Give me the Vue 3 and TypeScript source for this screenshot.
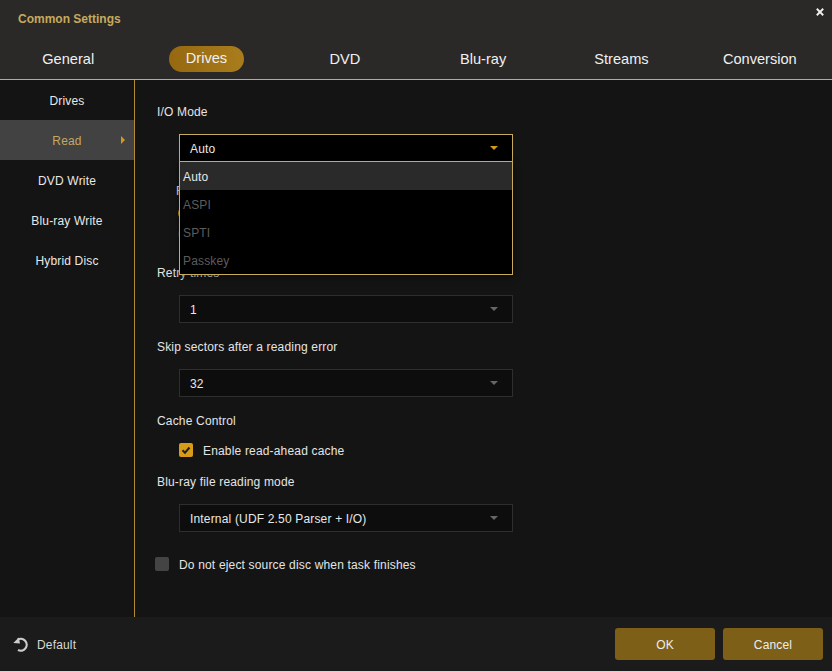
<script setup lang="ts">
import { ref } from 'vue'

const tabs = ['General', 'Drives', 'DVD', 'Blu-ray', 'Streams', 'Conversion']
const activeTab = ref('Drives')

const sideItems = ['Drives', 'Read', 'DVD Write', 'Blu-ray Write', 'Hybrid Disc']
const activeSide = ref('Read')

const ioModes = ['Auto', 'ASPI', 'SPTI', 'Passkey']
</script>

<template>
  <div class="dialog">
    <header class="head">
      <div class="title-row">
        <span class="title">Common Settings</span>
        <svg class="close" viewBox="0 0 10 10" width="8" height="8">
          <path d="M1 1 9 9M9 1 1 9" stroke="#eee" stroke-width="2.4" fill="none" />
        </svg>
      </div>
      <nav class="tabs">
        <div v-for="t in tabs" :key="t" class="tab">
          <span :class="{ pill: t === activeTab }">{{ t }}</span>
        </div>
      </nav>
    </header>

    <div class="body">
      <aside class="side">
        <div
          v-for="s in sideItems"
          :key="s"
          class="side-item"
          :class="{ active: s === activeSide }"
        >
          {{ s }}
          <i v-if="s === activeSide" class="side-arrow"></i>
        </div>
      </aside>

      <main class="main">
        <div class="label">I/O Mode</div>
        <div class="select-wrap">
          <div class="select open">
            <span>Auto</span>
            <i class="caret gold"></i>
          </div>
          <ul class="popup">
            <li
              v-for="(m, i) in ioModes"
              :key="m"
              :class="i === 0 ? 'current' : 'disabled'"
            >
              {{ m }}
            </li>
          </ul>
        </div>

        <!-- mostly hidden behind the open list -->
        <div class="behind">
          <div class="label">Read mode</div>
          <div class="radio-row"><i class="radio on"></i></div>
          <div class="radio-row"><i class="radio"></i></div>
        </div>

        <div class="label tight">Retry times</div>
        <div class="select gap-s">
          <span>1</span>
          <i class="caret"></i>
        </div>

        <div class="label tight gap-l">Skip sectors after a reading error</div>
        <div class="select gap-s">
          <span>32</span>
          <i class="caret"></i>
        </div>

        <div class="label cache">Cache Control</div>
        <label class="check indented">
          <span class="box on">
            <svg viewBox="0 0 14 14" width="14" height="14">
              <path d="M3.5 7.2 6 9.7 10.5 4.5" stroke="#222" stroke-width="2" fill="none" />
            </svg>
          </span>
          <span class="check-text">Enable read-ahead cache</span>
        </label>

        <div class="label tight gap-l">Blu-ray file reading mode</div>
        <div class="select gap-s">
          <span>Internal (UDF 2.50 Parser + I/O)</span>
          <i class="caret"></i>
        </div>

        <label class="check eject">
          <span class="box"></span>
          <span class="check-text">Do not eject source disc when task finishes</span>
        </label>
      </main>
    </div>

    <footer class="foot">
      <div class="default">
        <svg viewBox="0 0 16 16" width="16" height="16">
          <path d="M4.6 3.8A5.9 5.9 0 1 1 5 14" stroke="#ccc" stroke-width="2.2" fill="none" />
          <path d="M0.3 7 7 7.6 5.8 1.6Z" fill="#ccc" />
        </svg>
        <span>Default</span>
      </div>
      <div class="buttons">
        <button class="btn">OK</button>
        <button class="btn">Cancel</button>
      </div>
    </footer>
  </div>
</template>

<style scoped>
.dialog {
  width: 832px;
  height: 671px;
  display: flex;
  flex-direction: column;
  background: #141414;
  color: #e6e6e6;
  font-family: "Liberation Sans", Arial, sans-serif;
  font-size: 12px;
  letter-spacing: 0.17px;
  overflow: hidden;
}

.head {
  height: 80px;
  flex: none;
  box-sizing: border-box;
  background: #2a2928;
  border-bottom: 1px solid #c8ab5e;
}

.title-row {
  height: 38px;
  display: flex;
  justify-content: space-between;
  padding: 12px 8px 0 18px;
  box-sizing: border-box;
}

.title {
  color: #c8a95c;
  font-weight: bold;
  font-size: 12px;
  line-height: 14px;
  letter-spacing: 0;
}

.close {
  margin-top: -4px;
}

.tabs {
  display: grid;
  grid-template-columns: repeat(6, 1fr);
  margin-left: -1px;
  width: 830px;
}

.tab {
  height: 34px;
  padding-top: 8px;
  box-sizing: border-box;
  display: flex;
  justify-content: center;
  align-items: flex-start;
  font-size: 14.6px;
  letter-spacing: 0;
  color: #f0f0f0;
  line-height: 26px;
}

.pill {
  width: 75px;
  height: 26px;
  text-align: center;
  border-radius: 13px;
  background: linear-gradient(90deg, #966810, #a97c1c);
  line-height: 25px;
}

.body {
  flex: 1;
  display: flex;
  min-height: 0;
}

.side {
  width: 135px;
  flex: none;
  box-sizing: border-box;
  border-right: 1px solid #b08c36;
}

.side-item {
  position: relative;
  height: 40px;
  box-sizing: border-box;
  padding-top: 2px;
  display: flex;
  align-items: center;
  justify-content: center;
  color: #e8e8e8;
}

.side-item.active {
  background: #424242;
  color: #c4a85f;
}

.side-arrow {
  position: absolute;
  left: 121px;
  top: 16px;
  border-left: 4px solid #d6981c;
  border-top: 4px solid transparent;
  border-bottom: 4px solid transparent;
}

.main {
  flex: 1;
  padding: 23px 0 0 22px;
  display: flex;
  flex-direction: column;
  align-items: flex-start;
}

.label {
  height: 16px;
  line-height: 18px;
  color: #e4e4e4;
  white-space: nowrap;
}

.label.tight {
  line-height: 16px;
}

.gap-s {
  margin-top: 14px;
}

.gap-l {
  margin-top: 16px;
}

.cache {
  margin-top: 15px;
}

.select-wrap {
  position: relative;
  margin: 15px 0 0 22px;
  z-index: 2;
}

.select {
  width: 334px;
  height: 28px;
  box-sizing: border-box;
  margin-left: 22px;
  padding: 2px 14px 0 10px;
  display: flex;
  align-items: center;
  justify-content: space-between;
  background: #0d0d0d;
  border: 1px solid #2e2e2e;
  color: #e8e8e8;
}

.select.open {
  margin-left: 0;
  background: #000;
  border-color: #c8ab5e;
}

.caret {
  margin-top: -2px;
  border-top: 4px solid #666;
  border-left: 4px solid transparent;
  border-right: 4px solid transparent;
}

.caret.gold {
  border-top-color: #d6981c;
}

.popup {
  position: absolute;
  left: 0;
  top: 27px;
  width: 334px;
  box-sizing: border-box;
  margin: 0;
  padding: 0;
  list-style: none;
  background: #000;
  border: 1px solid #c8ab5e;
  box-shadow: 0 2px 6px rgba(0, 0, 0, 0.5);
}

.popup li {
  height: 28px;
  line-height: 30px;
  padding-left: 3px;
}

.popup .current {
  background: #2a2a2a;
  color: #e8e8e8;
}

.popup .disabled {
  color: #5c5c5c;
}

.behind {
  height: 103px;
  margin-left: 19px;
  padding-top: 20px;
  box-sizing: border-box;
}

.radio-row {
  height: 21px;
  display: flex;
  align-items: center;
  padding: 8px 0 0 2px;
  box-sizing: border-box;
}

.radio {
  width: 14px;
  height: 14px;
  box-sizing: border-box;
  border-radius: 50%;
  background: #2c2c2c;
}

.radio.on {
  background: #d6981c;
}

.check {
  display: flex;
  align-items: center;
  gap: 10px;
  height: 16px;
  color: #e4e4e4;
  white-space: nowrap;
}

.check-text {
  padding-top: 2px;
}

.indented {
  margin: 14px 0 0 22px;
}

.eject {
  margin: 24px 0 0 -2px;
}

.box {
  width: 14px;
  height: 14px;
  flex: none;
  border-radius: 2px;
  background: #444;
  border: 0;
}

.box.on {
  background: #d99c1a;
}

.box svg {
  display: block;
}

.foot {
  height: 54px;
  flex: none;
  display: flex;
  align-items: center;
  justify-content: space-between;
  padding: 0 9px 0 13px;
  background: #1b1b1b;
}

.default {
  display: flex;
  align-items: center;
  gap: 8px;
  color: #d8d8d8;
}

.default span {
  padding-top: 2px;
}

.default svg {
  display: block;
}

.buttons {
  display: flex;
  gap: 8px;
}

.btn {
  width: 100px;
  height: 32px;
  border: 0;
  border-radius: 3px;
  padding: 2px 0 0;
  background: #7d5f17;
  color: #eee;
  font: inherit;
  letter-spacing: inherit;
}
</style>
